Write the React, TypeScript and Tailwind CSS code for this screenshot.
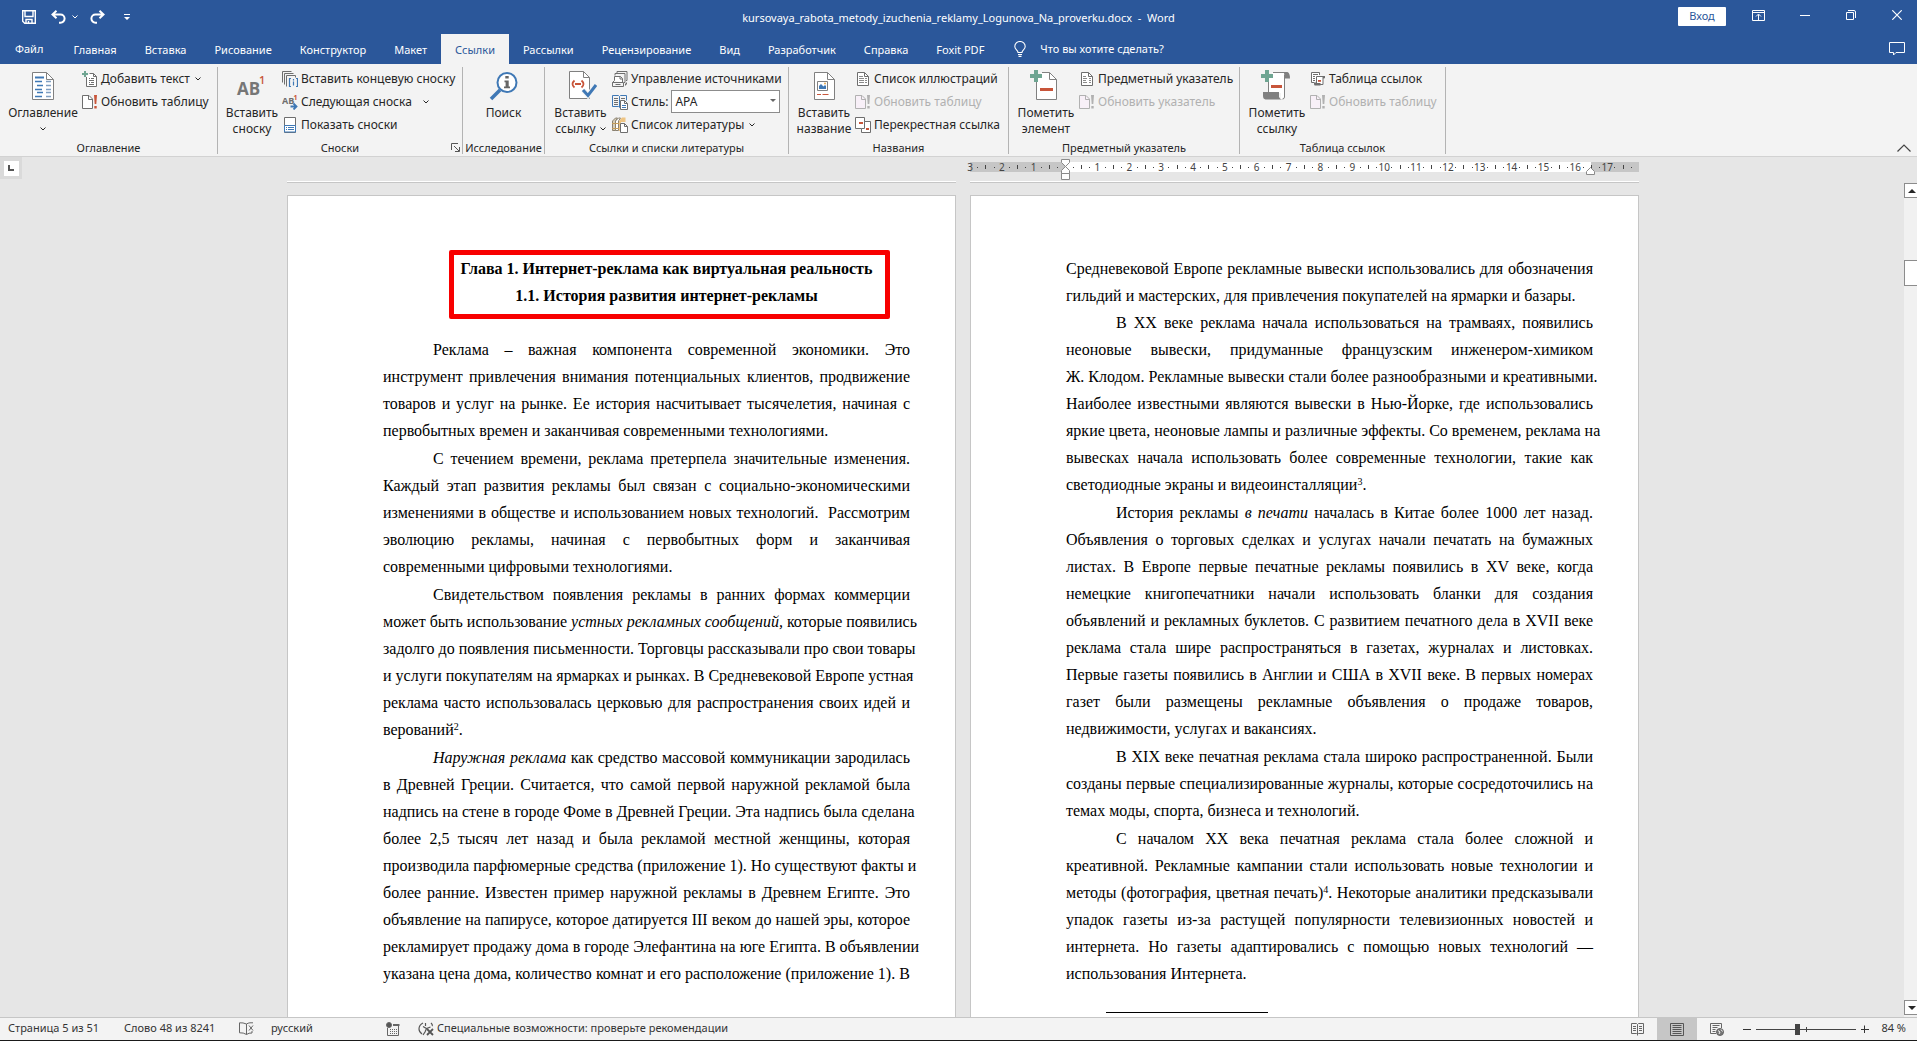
import React from "react";

type Kids = { children: React.ReactNode };

const GRAY = "#6e6e6e";
const BLUE = "#3f78b5";
const RED = "#c8553a";
const GREEN = "#6fa592";

/* ---------- icon helpers ---------- */

function Small({ children }: Kids) {
  return (
    <svg aria-hidden="true" viewBox="0 0 16 16" className="size-4 shrink-0" fill="none">
      {children}
    </svg>
  );
}

function Large({ children }: Kids) {
  return (
    <svg aria-hidden="true" viewBox="0 0 32 32" className="size-8 shrink-0" fill="none">
      {children}
    </svg>
  );
}

function Chevron({ className = "" }: { className?: string }) {
  return (
    <svg aria-hidden="true" viewBox="0 0 6 4" className={"h-1 w-1.5 shrink-0 " + className} fill="none">
      <path d="M.5 .5 3 3 5.5 .5" stroke="currentColor" strokeWidth="1" />
    </svg>
  );
}

const AddTextIcon = () => (
  <Small>
    <path d="M4.5 6v9.5h10V5.5l-3-3H7.5" fill="#fff" stroke={GRAY} />
    <path d="M11.5 2.5v3h3" stroke={GRAY} />
    <path d="M7 7.5h1m1 0h3M7 9.5h5M7 11.5h1m1 0h3M7 13.5h5" stroke={GRAY} />
    <path d="M3 0v6M0 3h6" stroke={GREEN} strokeWidth="2" />
  </Small>
);

const UpdateIcon = ({ off = false }: { off?: boolean }) => (
  <Small>
    <path d="M.5 1.500h6.500l3.500 3.500v9.500H.5z" fill={off ? "#f8f0f8" : "#fff"} stroke={off ? "#b1b1b1" : GRAY} />
    <path d="M6.500 1.500v4h4" stroke={off ? "#b1b1b1" : GRAY} />
    <path d="M12 1h3l-.7 9h-1.600zM12.300 12h2.400v2.500h-2.400z" fill={off ? "#b1b1b1" : RED} />
  </Small>
);

const EndnoteIcon = () => (
  <Small>
    <path d="M.5 11.500v-11h9M2.500 13.500v-11h9M4.500 15.500v-11h9v2" stroke={GRAY} />
    <path d="M9 7.500H7.500v8H9M14 7.500h1.500v8H14M11.500 8v1.500m0 1v4" stroke={BLUE} strokeWidth="1.200" />
  </Small>
);

const NextNoteIcon = () => (
  <Small>
    <text x="0" y="10" fontSize="9" fontWeight="700" fill={GRAY} fontFamily="Open Sans, sans-serif">
      AB
    </text>
    <text x="11.500" y="6" fontSize="7" fontWeight="700" fill={RED} fontFamily="Open Sans, sans-serif">
      1
    </text>
    <path d="M8.500 12.500h6M11.500 9.500l3 3-3 3" stroke={BLUE} strokeWidth="1.800" />
  </Small>
);

const ShowNotesIcon = () => (
  <Small>
    <path d="M2.500.5h11v15h-11z" fill="#fff" stroke={GRAY} />
    <path d="M2.500 8.500h11v6.500h-11z" fill="#fff" stroke={BLUE} />
    <path d="M4 10.500h1m1 0h6M4 12.500h1m1 0h6" stroke={BLUE} />
  </Small>
);

const SourcesIcon = () => (
  <Small>
    <path d="M5 2.500V.5h10v9h-1M3 4.500v-2h10v9h-1" stroke={GRAY} />
    <path d="M2.500 9.500v-4h6l2 2v4" fill="#fff" stroke={GRAY} />
    <path d="M8 5.500v2.500h2.500M.5 11.500h11v4H.5zM.5 11.500l2-2" stroke={GRAY} />
    <path d="M3.500 13h5v1h-5z" fill={GRAY} />
    <path d="M13 13l2-2v2l-2 2z" fill={GRAY} />
  </Small>
);

const StyleIcon = () => (
  <Small>
    <path d="M.5 1.500h6l1 1 1-1h6v5M7.500 2.500v11M.5 1.500v11h6l1 1" stroke={BLUE} />
    <path d="M2 4.500h4M2 6.500h4M2 8.500h4M2 10.500h4M9 4.500h4" stroke={GRAY} />
    <path d="M8.500 6.500h4l3 3v6h-7z" fill="#fff" stroke={GRAY} />
    <path d="M12.500 6.500v3h3" stroke={GRAY} />
    <path d="M10 11.500h4M10 13.500h4" stroke={BLUE} />
  </Small>
);

const BibliographyIcon = () => (
  <Small>
    <path d="M.5 4l3-3h2l-2 3v9.500h-3z" fill="#d8cdb6" stroke="#8a8170" />
    <path d="M3.500 4l3-3h2l-2 3v9.500h-3z" fill="#fff" stroke="#8a8170" />
    <path d="M7 4l3-3.500h3.500V5H9v9H7z" fill="#eec483" />
    <path d="M0 6.500h7M0 11.500h7" stroke="#c49c5a" />
    <path d="M8.500 6.500h4l3 3v6h-7z" fill="#fff" stroke={GRAY} />
    <path d="M12.500 6.500v3h3" stroke={GRAY} />
  </Small>
);

const ListIcon = () => (
  <Small>
    <path d="M2.500 1.500h7l4 4v9h-11z" fill="#fff" stroke={GRAY} />
    <path d="M9.500 1.500v4h4" stroke={GRAY} />
    <path d="M4 5.500h4M4 7.500h5m1 0h2M4 9.500h5m1 0h2M4 11.500h5m1 0h2" stroke="#8a8a8a" />
  </Small>
);

const CrossRefIcon = () => (
  <Small>
    <path d="M.5.5h9v11h-9z" fill="#fff" stroke={GRAY} />
    <path d="M9.500 4.500h6v11h-9v-4" fill="#fff" stroke={GRAY} />
    <path d="M9.500 4.500v7h-3" stroke={GRAY} />
    <path d="M4 5h4v2H4zM11 11h3v2h-3z" fill={RED} />
  </Small>
);

const IndexIcon = () => (
  <Small>
    <path d="M2.500 1.500h7l4 4v9h-11z" fill="#fff" stroke={GRAY} />
    <path d="M9.500 1.500v4h4" stroke={GRAY} />
    <path d="M4 5.500h3M4 7.500h4m2 0h2M4 9.500h3m3 0h2M4 11.500h4m2 0h2" stroke="#8a8a8a" />
  </Small>
);

const AuthoritiesIcon = () => (
  <Small>
    <path d="M9.500 4V1.500h-8v10h3" fill="#fff" stroke={GRAY} />
    <path d="M3 3.500h5M3 5.500h2M3 7.500h2M3 9.500h2" stroke={GRAY} />
    <path d="M6.500 12V5.500h8v1.500h-1.500v6.500H4.500V12z" fill="#fff" stroke={GRAY} />
    <path d="M4.500 12h6v2.500h-6zM12.500 5h2.500v2h-2.500z" fill={GRAY} />
    <path d="M8 9h3v1.800H8z" fill={RED} />
  </Small>
);

const TocIcon = () => (
  <Large>
    <path d="M5.500 2.500h14l7 7v20h-21z" fill="#fff" stroke="#808080" />
    <path d="M19.500 2.500v7h7" stroke="#808080" />
    <path d="M8 7.500h9" stroke={BLUE} strokeWidth="2" />
    <path d="M8 11.500h7M10 15.500h6M8 19.500h7M10 22.500h6M8 26.500h7" stroke={BLUE} strokeWidth="1.300" />
    <path d="M19 11.500h5M19 15.500h5M19 19.500h5M19 22.500h5M19 26.500h5" stroke="#7f9fc2" strokeWidth="1.300" />
  </Large>
);

const FootnoteIcon = () => (
  <Large>
    <text x="1" y="25" fontSize="17" fontWeight="700" fill="#767676" fontFamily="Open Sans, sans-serif">
      AB
    </text>
    <text x="23" y="14" fontSize="11" fontWeight="600" fill={RED} fontFamily="Open Sans, sans-serif">
      1
    </text>
  </Large>
);

const SearchIcon = () => (
  <Large>
    <circle cx="19" cy="12.500" r="9.500" fill="#fff" stroke={BLUE} strokeWidth="2" />
    <path d="M12 20 3 29" stroke={BLUE} strokeWidth="3.600" />
    <path d="M17.300 6h3.400v2.500h-3.400zM16.500 10.500h4.200v6h1.300v1.700h-6v-1.700h1.600v-4.300h-1.100z" fill="#666" />
  </Large>
);

const CitationIcon = () => (
  <Large>
    <path d="M4.500 1.500h14l6 6v21h-20z" fill="#fff" stroke="#808080" />
    <path d="M18.500 1.500v6h6" stroke="#808080" />
    <path d="M9.500 10.500q-4 3.500 0 7M16.500 10.500q4 3.500 0 7M10 14h6" stroke={RED} strokeWidth="1.800" />
    <path d="M18 20l5 5.500L31 15" stroke="#f3f3f3" strokeWidth="5" />
    <path d="M18 20l5 5.500L31 15" stroke={BLUE} strokeWidth="3" />
  </Large>
);

const CaptionIcon = () => (
  <Large>
    <path d="M6.500 2.500h13l7 7v20h-20z" fill="#fff" stroke="#808080" />
    <path d="M19.500 2.500v7h7" stroke="#808080" />
    <path d="M9.500 11.500h10v9h-10z" fill="#fff" stroke="#808080" />
    <path d="M11 19v-3l2-2 2.500 2.500L17 15l1 1v3z" fill={BLUE} />
    <circle cx="17" cy="13.500" r="1" fill="#e3a64f" />
    <path d="M9 24.500h4m1.500 0h6" stroke={RED} />
  </Large>
);

const MarkEntryIcon = () => (
  <Large>
    <path d="M6.500 8v21.500h20V9.500l-7-7H12" fill="#fff" stroke="#808080" />
    <path d="M19.500 2.500v7h7" stroke="#808080" />
    <path d="M10 19.500h13" stroke={RED} strokeWidth="3" />
    <path d="M6 0v12M0 6h12" stroke={GREEN} strokeWidth="4" />
  </Large>
);

const MarkCitationIcon = () => (
  <Large>
    <path d="M7 8v15h13v6h3.500V4.500l2-2H12z" fill="#fff" />
    <path d="M7.500 10v12.500M12 2.500h14M23.500 5v22q0 2-2 2" stroke="#808080" />
    <path d="M2 22h16v5q1 2 3 2.500H4.500Q2 29 2 26z" fill="#808080" />
    <path d="M23 2h3.500q2.500 1 2.500 6.500h-5.500z" fill="#808080" />
    <path d="M10 16.500h11" stroke={RED} strokeWidth="3" />
    <path d="M6 0v12M0 6h12" stroke={GREEN} strokeWidth="4" />
  </Large>
);

/* ---------- ribbon parts ---------- */

function BigButton({ icon, lines, arrow, width }: { icon: React.ReactNode; lines: string[]; arrow?: boolean; width: string }) {
  return (
    <button className={"flex flex-col items-center pt-[3px] " + width}>
      {icon}
      <span className="mt-[3px] flex flex-col items-center leading-4 whitespace-nowrap">
        {lines.map((l, i) => (
          <span key={l} className="flex items-center gap-1">
            {l}
            {arrow && i === lines.length - 1 && lines.length > 1 && <Chevron />}
          </span>
        ))}
        {arrow && lines.length === 1 && <Chevron className="mt-1.5" />}
      </span>
    </button>
  );
}

function Row({ icon, text, arrow, off, wide }: { icon: React.ReactNode; text: string; arrow?: boolean; off?: boolean; wide?: boolean }) {
  return (
    <button
      disabled={off}
      className={"flex h-[23px] items-center gap-[3px] whitespace-nowrap " + (off ? "text-[#b1b1b1]" : "")}
    >
      {icon}
      <span>{text}</span>
      {arrow && <Chevron className={wide ? "ml-2" : "ml-0.5"} />}
    </button>
  );
}

function Group({ label, width, launcher, children }: Kids & { label: string; width: string; launcher?: boolean }) {
  return (
    <section aria-label={label} className={"relative flex shrink-0 flex-col border-r border-[#b3b3b3] " + width}>
      <div className="flex h-[75px] items-start">{children}</div>
      <div className="text-center text-[11px] leading-3 whitespace-nowrap">{label}</div>
      {launcher && (
        <button aria-label="Параметры сносок" className="absolute right-0.5 bottom-0.5">
          <svg viewBox="0 0 9 9" className="size-[9px]" fill="none" stroke="#555">
            <path d="M.5 7V.5H7M3 3l5 5M8.500 4v4.500H4" />
          </svg>
        </button>
      )}
    </section>
  );
}

function Ribbon() {
  return (
    <div className="flex h-[93px] shrink-0 border-b border-[#d2d2d2] bg-[#f3f3f3] pt-[3px] pb-0.5 text-xs text-[#262626]">
      <Group label="Оглавление" width="w-[218px]">
        <BigButton icon={<TocIcon />} lines={["Оглавление"]} arrow width="ml-1 w-[78px]" />
        <div>
          <Row icon={<AddTextIcon />} text="Добавить текст" arrow />
          <Row icon={<UpdateIcon />} text="Обновить таблицу" />
        </div>
      </Group>
      <Group label="Сноски" width="w-[245px]" launcher>
        <BigButton icon={<FootnoteIcon />} lines={["Вставить", "сноску"]} width="ml-1 w-[60px]" />
        <div>
          <Row icon={<EndnoteIcon />} text="Вставить концевую сноску" />
          <Row icon={<NextNoteIcon />} text="Следующая сноска" arrow wide />
          <Row icon={<ShowNotesIcon />} text="Показать сноски" />
        </div>
      </Group>
      <Group label="Исследование" width="w-[82px]">
        <BigButton icon={<SearchIcon />} lines={["Поиск"]} width="w-[81px]" />
      </Group>
      <Group label="Ссылки и списки литературы" width="w-[244px]">
        <BigButton icon={<CitationIcon />} lines={["Вставить", "ссылку"]} arrow width="ml-1 w-[63px]" />
        <div>
          <Row icon={<SourcesIcon />} text="Управление источниками" />
          <div className="flex h-[23px] items-center gap-[3px]">
            <StyleIcon />
            <label htmlFor="cite-style">Стиль:</label>
            <div className="relative">
              <select
                id="cite-style"
                className="block h-[23px] w-[109px] appearance-none border border-[#8c8c8c] bg-white pl-[3px] leading-4"
              >
                <option>APA</option>
              </select>
              <svg viewBox="0 0 6 3" className="pointer-events-none absolute top-[9px] right-1 h-[3px] w-1.5">
                <path d="M0 0h6L3 3z" fill="#666" />
              </svg>
            </div>
          </div>
          <Row icon={<BibliographyIcon />} text="Список литературы" arrow />
        </div>
      </Group>
      <Group label="Названия" width="w-[220px]">
        <BigButton icon={<CaptionIcon />} lines={["Вставить", "название"]} width="ml-1 w-[62px]" />
        <div>
          <Row icon={<ListIcon />} text="Список иллюстраций" />
          <Row icon={<UpdateIcon off />} text="Обновить таблицу" off />
          <Row icon={<CrossRefIcon />} text="Перекрестная ссылка" />
        </div>
      </Group>
      <Group label="Предметный указатель" width="w-[231px]">
        <BigButton icon={<MarkEntryIcon />} lines={["Пометить", "элемент"]} width="ml-1 w-[66px]" />
        <div>
          <Row icon={<IndexIcon />} text="Предметный указатель" />
          <Row icon={<UpdateIcon off />} text="Обновить указатель" off />
        </div>
      </Group>
      <Group label="Таблица ссылок" width="w-[206px]">
        <BigButton icon={<MarkCitationIcon />} lines={["Пометить", "ссылку"]} width="ml-1 w-[66px]" />
        <div>
          <Row icon={<AuthoritiesIcon />} text="Таблица ссылок" />
          <Row icon={<UpdateIcon off />} text="Обновить таблицу" off />
        </div>
      </Group>
      <button aria-label="Свернуть ленту" className="mr-1.5 mb-0.5 ml-auto self-end">
        <svg viewBox="0 0 14 8" className="h-2 w-3.5" fill="none" stroke="#444" strokeWidth="1.200">
          <path d="M.5 7.500 7 1l6.500 6.500" />
        </svg>
      </button>
    </div>
  );
}

/* ---------- title bar and tabs ---------- */

function TitleBar() {
  return (
    <header className="grid h-[34px] shrink-0 grid-cols-[1fr_auto_1fr] items-center text-white">
      <div className="flex items-center pl-[22px]">
        <button aria-label="Сохранить">
          <svg viewBox="0 0 14 14" className="size-3.5" fill="none" stroke="#fff" strokeWidth="1.400">
            <path d="M.7.7h12.600v12.600H2.700l-2-2zM3 1v5.500h8V1M4 13V9.500h6V13M6.500 11v2" />
          </svg>
        </button>
        <button aria-label="Отменить" className="ml-[15px]">
          <svg viewBox="0 0 15 14" className="h-3.5 w-[15px]" fill="none" stroke="#fff" strokeWidth="2">
            <path d="M5.500.8 1.500 4.500l4 3.700M2 4.500h7.500a4 4 0 0 1 0 8.200H8" />
          </svg>
        </button>
        <button aria-label="Список отмен" className="ml-1.5">
          <Chevron />
        </button>
        <button aria-label="Вернуть" className="ml-3">
          <svg viewBox="0 0 15 14" className="h-3.5 w-[15px]" fill="none" stroke="#fff" strokeWidth="2">
            <path d="M9.500.8l4 3.700-4 3.700M13 4.500H5.500a4 4 0 0 0 0 8.200H7" />
          </svg>
        </button>
        <button aria-label="Настройка панели" className="ml-[19px]">
          <svg viewBox="0 0 6 6" className="size-1.5">
            <path d="M0 0h6v1H0zM0 3h6L3 6z" fill="#fff" />
          </svg>
        </button>
      </div>
      <h1 className="pt-0.5 text-[11px] whitespace-pre">kursovaya_rabota_metody_izuchenia_reklamy_Logunova_Na_proverku.docx  -  Word</h1>
      <div className="flex items-center justify-end pr-[15px] pb-1">
        <button className="mt-0.5 h-[19px] w-12 rounded-[1px] bg-white text-[11px] leading-4 text-[#2b579a]">Вход</button>
        <button aria-label="Параметры ленты" className="ml-[26px]">
          <svg viewBox="0 0 13 11" className="h-[11px] w-[13px]" fill="none" stroke="#fff">
            <path d="M.5.5h12v10H.5zM.5 2.500h12M6.500 10V4.500M4 6.500 6.500 4 9 6.500" />
          </svg>
        </button>
        <button aria-label="Свернуть" className="ml-[35px] w-2.5">
          <span className="block h-px bg-white" />
        </button>
        <button aria-label="Восстановить" className="ml-9">
          <svg viewBox="0 0 10 10" className="size-2.5" fill="none" stroke="#fff">
            <path d="M.5 2.500h7v7h-7zM2 .5h6q1.500 0 1.500 1.500v6" />
          </svg>
        </button>
        <button aria-label="Закрыть" className="ml-9">
          <svg viewBox="0 0 10 10" className="size-2.5" fill="none" stroke="#fff" strokeWidth="1.200">
            <path d="M.3.3l9.400 9.400M9.700.3.3 9.700" />
          </svg>
        </button>
      </div>
    </header>
  );
}

const TABS = [
  "Главная",
  "Вставка",
  "Рисование",
  "Конструктор",
  "Макет",
  "Ссылки",
  "Рассылки",
  "Рецензирование",
  "Вид",
  "Разработчик",
  "Справка",
  "Foxit PDF",
];

function Tabs() {
  return (
    <nav className="flex h-[30px] shrink-0 items-stretch text-[11px] text-white">
      <button className="mr-4 pl-[15px]">Файл</button>
      {TABS.map((t) => (
        <button
          key={t}
          className={"px-3.5 pt-0.5 whitespace-nowrap " + (t === "Ссылки" ? "bg-[#f3f3f3] text-[#2b579a]" : "")}
        >
          {t}
        </button>
      ))}
      <button className="ml-4 flex items-center gap-3.5">
        <svg viewBox="0 0 12 16" className="h-4 w-3" fill="none" stroke="#fff" strokeWidth="1.100">
          <path d="M4 11.500C4 9 .8 8.500.8 5.500a5.200 5 0 0 1 10.400 0c0 3-3.200 3.500-3.200 6zM4 13.500h4M4.500 15.400h3" />
        </svg>
        Что вы хотите сделать?
      </button>
      <button aria-label="Примечания" className="mr-3 ml-auto">
        <svg viewBox="0 0 16 14" className="h-3.5 w-4" fill="none" stroke="#fff">
          <path d="M.5.5h15v10H7L4.500 13v-2.500h-4z" />
        </svg>
      </button>
    </nav>
  );
}

/* ---------- document ---------- */

function Para({ lines }: { lines: React.ReactNode[] }) {
  return (
    <p className="mb-px">
      {lines.map((l, i) => (
        <span
          key={i}
          className={
            "block whitespace-nowrap " +
            (i === 0 ? "pl-[50px] " : "") +
            (i === lines.length - 1 ? "" : "text-justify [text-align-last:justify]")
          }
        >
          {l}
        </span>
      ))}
    </p>
  );
}

const Note = ({ children }: Kids) => <sup className="text-[10px] leading-none">{children}</sup>;

const LEFT: React.ReactNode[][] = [
  [
    "Реклама – важная компонента современной экономики. Это",
    "инструмент привлечения внимания потенциальных клиентов, продвижение",
    "товаров и услуг на рынке. Ее история насчитывает тысячелетия, начиная с",
    "первобытных времен и заканчивая современными технологиями.",
  ],
  [
    "С течением времени, реклама претерпела значительные изменения.",
    "Каждый этап развития рекламы был связан с социально-экономическими",
    "изменениями в обществе и использованием новых технологий. \u00a0Рассмотрим",
    "эволюцию рекламы, начиная с первобытных форм и заканчивая",
    "современными цифровыми технологиями.",
  ],
  [
    "Свидетельством появления рекламы в ранних формах коммерции",
    <>
      может быть использование <i>устных рекламных сообщений,</i> которые появились
    </>,
    "задолго до появления письменности. Торговцы рассказывали про свои товары",
    "и услуги покупателям на ярмарках и рынках. В Средневековой Европе устная",
    "реклама часто использовалась церковью для распространения своих идей и",
    <>
      верований<Note>2</Note>.
    </>,
  ],
  [
    <>
      <i>Наружная реклама</i> как средство массовой коммуникации зародилась
    </>,
    "в Древней Греции. Считается, что самой первой наружной рекламой была",
    "надпись на стене в городе Фоме в Древней Греции. Эта надпись была сделана",
    "более 2,5 тысяч лет назад и была рекламой местной женщины, которая",
    "производила парфюмерные средства (приложение 1). Но существуют факты и",
    "более ранние. Известен пример наружной рекламы в Древнем Египте. Это",
    "объявление на папирусе, которое датируется III веком до нашей эры, которое",
    "рекламирует продажу дома в городе Элефантина на юге Египта. В объявлении",
    "указана цена дома, количество комнат и его расположение (приложение 1). В",
    "",
  ],
];

const RIGHT: React.ReactNode[][] = [
  [
    "В XX веке реклама начала использоваться на трамваях, появились",
    "неоновые вывески, придуманные французским инженером-химиком",
    "Ж. Клодом. Рекламные вывески стали более разнообразными и креативными.",
    "Наиболее известными являются вывески в Нью-Йорке, где использовались",
    "яркие цвета, неоновые лампы и различные эффекты. Со временем, реклама на",
    "вывесках начала использовать более современные технологии, такие как",
    <>
      светодиодные экраны и видеоинсталляции<Note>3</Note>.
    </>,
  ],
  [
    <>
      История рекламы <i>в печати</i> началась в Китае более 1000 лет назад.
    </>,
    "Объявления о торговых сделках и услугах начали печатать на бумажных",
    "листах. В Европе первые печатные рекламы появились в XV веке, когда",
    "немецкие книгопечатники начали использовать бланки для создания",
    "объявлений и рекламных буклетов. С развитием печатного дела в XVII веке",
    "реклама стала шире распространяться в газетах, журналах и листовках.",
    "Первые газеты появились в Англии и США в XVII веке. В первых номерах",
    "газет были размещены рекламные объявления о продаже товаров,",
    "недвижимости, услугах и вакансиях.",
  ],
  [
    "В XIX веке печатная реклама стала широко распространенной. Были",
    "созданы первые специализированные журналы, которые сосредоточились на",
    "темах моды, спорта, бизнеса и технологий.",
  ],
  [
    "С началом XX века печатная реклама стала более сложной и",
    "креативной. Рекламные кампании стали использовать новые технологии и",
    <>
      методы (фотография, цветная печать)<Note>4</Note>. Некоторые аналитики предсказывали
    </>,
    "упадок газеты из-за растущей популярности телевизионных новостей и",
    "интернета. Но газеты адаптировались с помощью новых технологий —",
    "использования Интернета.",
  ],
];

const MARKS = Array.from({ length: 21 }, (_, i) => i - 3);

function markColor(n: number) {
  if (n < 0 || n > 16) return "bg-[#c6c6c6]";
  if (n === 16) return "bg-linear-to-r from-white from-50% to-[#c6c6c6] to-50%";
  return "bg-white";
}

function Ruler() {
  return (
    <div aria-hidden="true" className="relative mt-[5px] flex h-2.5 text-[10px] leading-[10px] text-[#444]">
      {MARKS.map((n) => (
        <div key={n} className={"relative flex flex-1 items-center justify-evenly " + markColor(n)}>
          {n !== 0 && <span className="absolute top-0 left-0 -translate-x-1/2">{Math.abs(n)}</span>}
          <span className="size-px bg-[#444]" />
          <span className="h-1 w-px bg-[#444]" />
          <span className="size-px bg-[#444]" />
        </div>
      ))}
      <svg viewBox="0 0 9 22" className="absolute -top-[3px] left-[91px] h-[22px] w-[9px]" fill="#fff" stroke="#8a8a8a">
        <path d="M.5.5h8v3l-4 4-4-4zM.5 14.500v-3l4-4 4 4v3zM.5 14.500h8v6h-8z" />
      </svg>
      <svg viewBox="0 0 9 8" className="absolute top-[5px] right-11 h-2 w-[9px]" fill="#fff" stroke="#8a8a8a">
        <path d="M.5 7.500v-3l4-4 4 4v3z" />
      </svg>
    </div>
  );
}

function Page({ children }: Kids) {
  return (
    <article className="flex-1 overflow-hidden border border-b-0 border-[#c6c6c6] bg-white pt-[59px] pr-[45px] pl-[95px] font-['Liberation_Serif','Times_New_Roman',serif] text-base leading-[27px] text-black">
      {children}
    </article>
  );
}

function Column({ ruler, children }: Kids & { ruler?: boolean }) {
  return (
    <div className="flex min-h-0 w-[669px] flex-col">
      {ruler ? <Ruler /> : <div className="mt-[5px] h-2.5" />}
      <div className="mt-[9px] mb-3 h-0.5 shrink-0 border-b border-[#c6c6c6] bg-white" />
      {children}
    </div>
  );
}

function Scrollbar() {
  return (
    <div className="mt-[26px] flex w-[13px] flex-col overflow-hidden bg-[#f1f1f1] pb-0.5">
      <button aria-label="Вверх" className="flex h-[15px] w-4 items-center border border-[#8c8c8c] bg-white pl-[3px]">
        <svg viewBox="0 0 8 4" className="h-1 w-2">
          <path d="M0 4h8L4 0z" fill="#262626" />
        </svg>
      </button>
      <div className="mt-[62px] h-[26px] w-4 border border-[#8c8c8c] bg-white" />
      <button aria-label="Вниз" className="mt-auto flex h-[15px] w-4 items-center border border-[#8c8c8c] bg-white pl-[3px]">
        <svg viewBox="0 0 8 4" className="h-1 w-2">
          <path d="M0 0h8L4 4z" fill="#262626" />
        </svg>
      </button>
    </div>
  );
}

function Workspace() {
  return (
    <main className="flex min-h-0 flex-1 bg-[#e6e6e6]">
      <div className="w-[22px]">
        <button aria-label="Тип табуляции" className="flex size-[22px] items-center justify-center bg-[#dadada]">
          <span className="flex size-[15px] items-center justify-center bg-white">
            <span className="size-1.5 border-b-2 border-l-2 border-[#555]" />
          </span>
        </button>
      </div>
      <div className="flex min-w-0 flex-1 justify-center gap-3.5">
        <Column>
          <Page>
            <div className="relative mb-[27px] pl-10 text-center font-bold">
              <h2>Глава 1. Интернет-реклама как виртуальная реальность</h2>
              <h3>1.1. История развития интернет-рекламы</h3>
              <div className="absolute -top-[5px] -right-[-20px] left-[66px] h-[69px] rounded-xs border-5 border-[#f80000]" />
            </div>
            {LEFT.map((p, i) => (
              <Para key={i} lines={p} />
            ))}
          </Page>
        </Column>
        <Column ruler>
          <Page>
            <p className="whitespace-nowrap">
              <span className="block text-justify [text-align-last:justify]">
                Средневековой Европе рекламные вывески использовались для обозначения
              </span>
              гильдий и мастерских, для привлечения покупателей на ярмарки и базары.
            </p>
            {RIGHT.map((p, i) => (
              <Para key={i} lines={p} />
            ))}
            <hr className="mt-[25px] ml-10 w-[162px] border-black" />
          </Page>
        </Column>
      </div>
      <Scrollbar />
    </main>
  );
}

/* ---------- status bar ---------- */

function StatusBar() {
  return (
    <footer className="flex h-[24px] shrink-0 items-stretch border-t border-b border-t-[#c6c6c6] border-b-[#1a1a1a] bg-[#f3f3f3] pb-px text-[11px] text-[#333]">
      <div className="flex items-center pl-2">
        <button className="w-[116px] text-left">Страница 5 из 51</button>
        <button className="w-[115px] text-left">Слово 48 из 8241</button>
        <button aria-label="Правописание">
          <svg viewBox="0 0 15 13" className="h-[13px] w-[15px]" fill="none" stroke="#666">
            <path d="M7.500 2v10.500M7.500 2Q4 .5.500.800v10q4-.3 7 1.700M7.500 2Q9 1 11 .8h3M13 9v2q-3-.3-5.500 1.500M10 3.500l4 5M14 3.500l-4 5" />
          </svg>
        </button>
        <button className="ml-[17px] w-[115px] text-left">русский</button>
        <button aria-label="Запись макроса">
          <svg viewBox="0 0 14 14" className="size-3.5" fill="none" stroke="#666">
            <path d="M7 2.500h6.500M1.500 6v7.500h11v-11M7 3.500h6.500" />
            <path d="M4 7.500h1m1 0h1m1 0h1m1 0h1M4 9.500h1m1 0h1m1 0h1m1 0h1M4 11.500h1m1 0h1m1 0h1m1 0h1" />
            <circle cx="3" cy="3" r="2.500" fill="#555" />
          </svg>
        </button>
        <button className="ml-[18px] flex items-center gap-[3px] whitespace-nowrap">
          <svg viewBox="0 0 16 14" className="h-3.5 w-4" fill="none" stroke="#555" strokeWidth="1.200">
            <path d="M5 1Q1 3 1 7q0 3 3 5M7.500 1v3M5 4.500l3.500 2 4-1.500M8.500 6.500 7 10l-2 3M14 4q1-1-1-3" />
            <path d="M9 7l6 6M15 7l-6 6" strokeWidth="1.800" />
          </svg>
          Специальные возможности: проверьте рекомендации
        </button>
      </div>
      <div className="-mb-px ml-auto flex items-stretch pr-[11px]">
        <button aria-label="Режим чтения" className="flex w-10 items-center justify-center">
          <svg viewBox="0 0 13 13" className="size-[13px]" fill="none" stroke="#666">
            <path d="M.5.5h5l1 1 1-1h5v10h-5l-1 1-1-1h-5zM6.500 1.500v11M2 3.500h3M2 5.500h3M2 7.500h3M8 3.500h3M8 5.500h3M8 7.500h3" />
          </svg>
        </button>
        <button aria-label="Разметка страницы" className="flex w-10 items-center justify-center bg-[#c6c6c6]">
          <svg viewBox="0 0 14 13" className="h-[13px] w-3.5" fill="none" stroke="#555">
            <path d="M.5.5h13v12H.5zM2.500 2.500h9M2.500 4.500h9M2.500 6.500h9M2.500 8.500h9M2.500 10.500h9" />
          </svg>
        </button>
        <button aria-label="Веб-документ" className="flex w-10 items-center justify-center">
          <svg viewBox="0 0 14 13" className="h-[13px] w-3.5" fill="none" stroke="#666">
            <path d="M6 10.500H.5V.5h11V5M2.500 2.500h7M2.500 4.500h5M2.500 6.500h3M2.500 8.500h3" />
            <circle cx="10" cy="9" r="3.500" fill="#777" />
            <path d="M8 7.500l2 1.500-1 2M11 6.500l1.500 2" stroke="#f3f3f3" />
          </svg>
        </button>
        <button aria-label="Уменьшить" className="ml-1.5 flex w-2 items-center">
          <span className="h-px w-2 bg-[#333]" />
        </button>
        <div className="relative mx-[5px] flex items-center">
          <input
            type="range"
            aria-label="Масштаб"
            min={0}
            max={100}
            defaultValue={41}
            className="h-3 w-[100px] appearance-none bg-transparent [&::-webkit-slider-runnable-track]:h-px [&::-webkit-slider-runnable-track]:bg-[#444] [&::-webkit-slider-thumb]:-mt-[5px] [&::-webkit-slider-thumb]:h-[11px] [&::-webkit-slider-thumb]:w-[5px] [&::-webkit-slider-thumb]:appearance-none [&::-webkit-slider-thumb]:bg-[#444]"
          />
          <span className="absolute left-1/2 h-[5px] w-px bg-[#444]" />
        </div>
        <button aria-label="Увеличить" className="flex items-center">
          <svg viewBox="0 0 8 8" className="size-2" stroke="#333">
            <path d="M0 4.500h8M3.500.500v8" />
          </svg>
        </button>
        <button className="ml-3 pb-px whitespace-nowrap">84 %</button>
      </div>
    </footer>
  );
}

export default function App() {
  return (
    <div className="flex h-screen flex-col overflow-hidden bg-[#2b579a] font-['Noto_Sans','Segoe_UI',sans-serif]">
      <TitleBar />
      <Tabs />
      <Ribbon />
      <Workspace />
      <StatusBar />
    </div>
  );
}
